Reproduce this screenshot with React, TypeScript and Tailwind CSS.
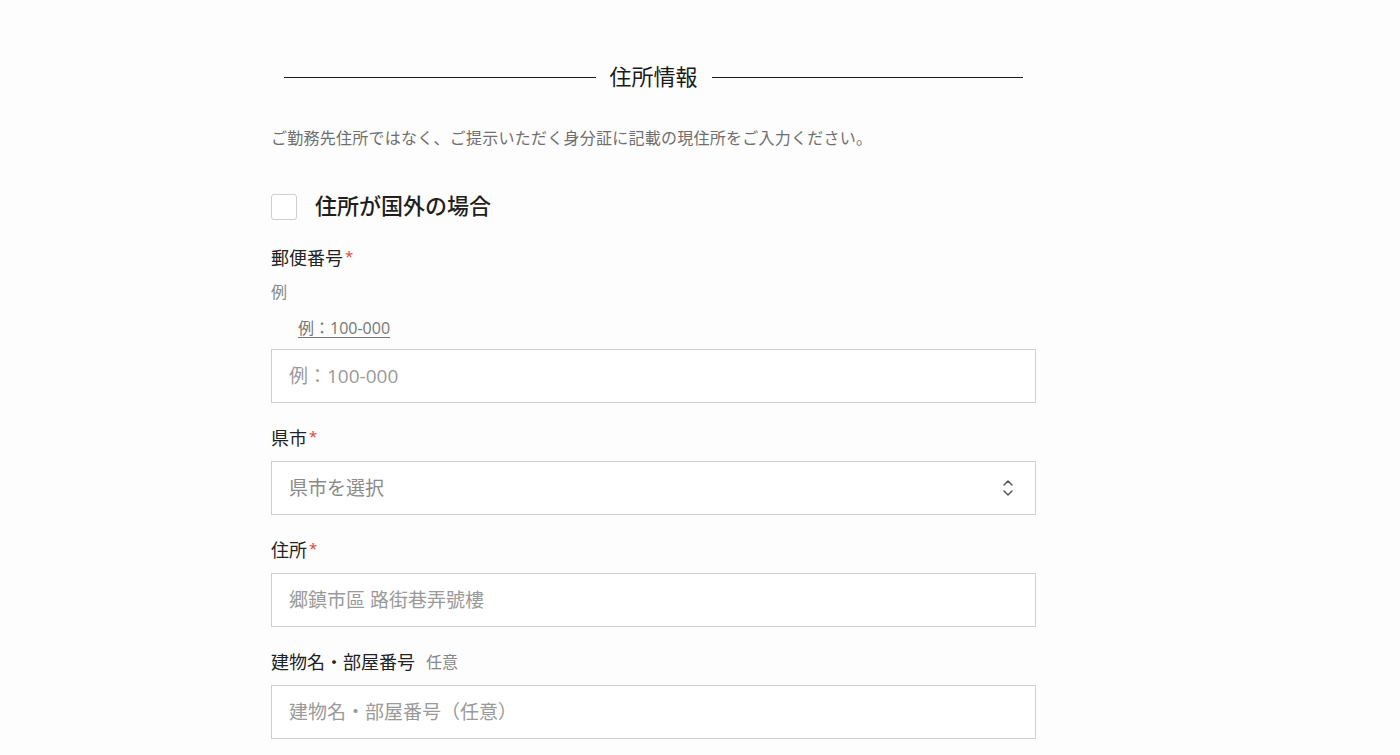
import React from "react";

const font = { fontFamily: '"Open Sans", "Noto Sans CJK JP", "Noto Sans", sans-serif' };

function Label({ text, required, optional }: { text: string; required?: boolean; optional?: boolean }) {
  return (
    <div className="flex items-center h-6 text-[18px] leading-6 text-[#222]">
      <span>{text}</span>
      {required && <span className="ml-[2px] -mt-[3px] text-[15px] leading-none text-[#e0413a]">*</span>}
      {optional && <span className="ml-[11px] text-[16px] text-[#888]">任意</span>}
    </div>
  );
}

function TextInput({ placeholder }: { placeholder: string }) {
  return (
    <input
      type="text"
      placeholder={placeholder}
      className="block w-full h-[54px] border border-[#cfcfcf] bg-white px-[17px] pb-[1px] text-[19px] text-[#222] placeholder:text-[#9a9a9a] outline-none"
      style={font}
    />
  );
}

export default function App() {
  return (
    <div className="min-h-[755px] bg-[#fdfdfd] pl-[271px] pt-[60px]" style={font}>
      <div className="w-[765px]">
        {/* Heading */}
        <div className="flex items-center h-8 px-[13px] gap-[14px]">
          <div className="flex-1 h-px mt-[2px] bg-[#1a1a1a]" />
          <h2 className="text-[22px] leading-8 text-[#1a1a1a]">住所情報</h2>
          <div className="flex-1 h-px mt-[2px] bg-[#1a1a1a]" />
        </div>

        <p className="mt-[34px] text-[16px] leading-6 tracking-[0.25px] text-[#6f6f6f]">
          ご勤務先住所ではなく、ご提示いただく身分証に記載の現住所をご入力ください。
        </p>

        {/* Overseas checkbox */}
        <label className="mt-[44px] flex items-center gap-[18px] h-[26px]">
          <span className="w-[26px] h-[26px] rounded-[3px] border border-[#cfcfcf] bg-white" />
          <span className="pb-[4px] text-[22px] font-medium leading-[26px] text-[#1f1f1f]">住所が国外の場合</span>
        </label>

        {/* Postal code */}
        <div className="mt-[26px]">
          <Label text="郵便番号" required />
          <div className="mt-[10px] h-6 text-[16px] leading-6 text-[#888]">例</div>
          <div className="mt-[12px] h-6 pl-[27px] text-[16px] leading-6 text-[#777]">
            <span className="underline underline-offset-[3px]">例：100-000</span>
          </div>
          <div className="mt-[9px]">
            <TextInput placeholder="例：100-000" />
          </div>
        </div>

        {/* Prefecture */}
        <div className="mt-[23px]">
          <Label text="県市" required />
          <div className="mt-[11px] flex items-center w-full h-[54px] border border-[#cfcfcf] bg-white px-[17px]">
            <span className="text-[19px] text-[#8a8a8a]">県市を選択</span>
            <svg
              className="ml-auto mr-[4px]"
              width="12"
              height="20"
              viewBox="0 0 12 20"
              fill="none"
              stroke="#555"
              strokeWidth="1.5"
              strokeLinecap="round"
              strokeLinejoin="round"
            >
              <path d="M2 7 L6 3 L10 7" />
              <path d="M2 13 L6 17 L10 13" />
            </svg>
          </div>
        </div>

        {/* Address */}
        <div className="mt-[23px]">
          <Label text="住所" required />
          <div className="mt-[11px]">
            <TextInput placeholder="郷鎮市區 路街巷弄號樓" />
          </div>
        </div>

        {/* Building */}
        <div className="mt-[23px]">
          <Label text="建物名・部屋番号" optional />
          <div className="mt-[11px]">
            <TextInput placeholder="建物名・部屋番号（任意）" />
          </div>
        </div>
      </div>
    </div>
  );
}
